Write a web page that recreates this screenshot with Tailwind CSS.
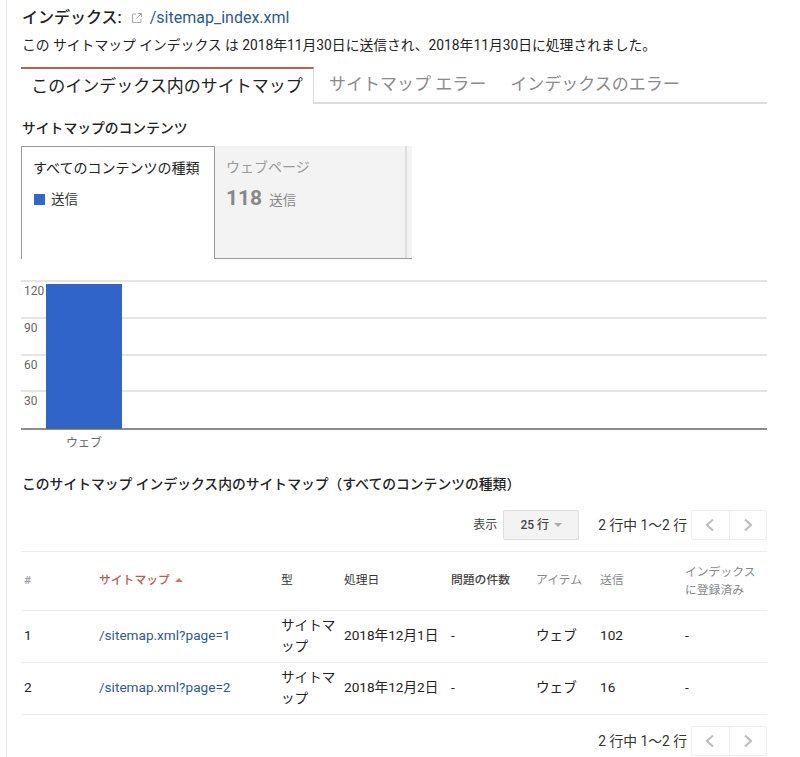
<!DOCTYPE html>
<html lang="ja">
<head>
    <meta charset="UTF-8">
    <title>サイトマップ</title>
    <script src="https://cdn.jsdelivr.net/npm/@tailwindcss/browser@4"></script>
</head>
<body class="bg-white text-[#222] font-['Roboto','Noto_Sans_CJK_JP',sans-serif] overflow-hidden">
    <div class="ml-[6px] h-[757px] border-l border-[#e8e8e8] pl-[14px] pr-[33px] overflow-hidden">

        <!-- 見出し -->
        <div class="h-[36px] flex items-center gap-[9px] text-[16px] leading-[20px] pl-[1px]">
            <span class="font-medium">インデックス:</span>
            <svg class="w-[12px] h-[12px] text-[#aaa]" viewBox="0 0 12 12" fill="none" stroke="currentColor" stroke-width="1">
                <path d="M5 2H1.5v8.5H10V7M7 1.5h3.5V5M10.5 1.5L5.5 6.5"/>
            </svg>
            <a class="text-[#2d5a8e] -ml-[2px]">/sitemap_index.xml</a>
        </div>
        <p class="text-[13.8px] leading-[18px] whitespace-nowrap pl-[1px]">この サイトマップ インデックス は 2018年11月30日に送信され、2018年11月30日に処理されました。</p>

        <!-- タブ -->
        <div class="flex mt-[13px] h-[37px] border-b-2 border-[#ddd] text-[17px]">
            <div class="w-[293px] h-[37px] border-t-2 border-t-[#c0604f] border-r border-r-[#ddd] bg-white flex items-center justify-center">このインデックス内のサイトマップ</div>
            <div class="pl-[15px] flex items-center text-[#8a8a8a] h-[35px]">サイトマップ エラー</div>
            <div class="pl-[24px] flex items-center text-[#8a8a8a] h-[35px]">インデックスのエラー</div>
        </div>

        <h2 class="mt-[15px] pl-[1px] text-[13.8px] leading-[18px] font-medium">サイトマップのコンテンツ</h2>

        <!-- コンテンツの種類 -->
        <div class="flex mt-[9px] h-[113px]">
            <div class="w-[193px] border-l border-t border-[#999] pl-[12px] pt-[11px]">
                <div class="text-[14px] leading-[20px] whitespace-nowrap -ml-[1px]">すべてのコンテンツの種類</div>
                <div class="flex items-center gap-[6px] mt-[11px] text-[13.5px] leading-[20px] text-[#333]">
                    <span class="w-[11px] h-[11px] bg-[#3366cc]"></span>送信
                </div>
            </div>
            <div class="w-[198px] border-b border-[#999] bg-[#f3f3f3] flex">
                <div class="w-[193px] border-r-2 border-[#ddd] pl-[11px] pt-[11px] border-l border-l-[#999]">
                    <div class="text-[14px] leading-[20px] text-[#999]">ウェブページ</div>
                    <div class="flex items-baseline gap-[7px] mt-[7px] text-[#888]">
                        <span class="text-[21px] leading-[28px] font-bold">118</span>
                        <span class="text-[13.5px]">送信</span>
                    </div>
                </div>
            </div>
        </div>

        <!-- グラフ -->
        <svg class="block mt-[21px] w-[746px] h-[172px] font-['Roboto','Noto_Sans_CJK_JP',sans-serif]" viewBox="0 0 746 172">
            <g stroke="#ddd" stroke-width="1.5">
                <line x1="0" x2="746" y1="1" y2="1"/>
                <line x1="0" x2="746" y1="38" y2="38"/>
                <line x1="0" x2="746" y1="75" y2="75"/>
                <line x1="0" x2="746" y1="111" y2="111"/>
            </g>
            <rect x="25" y="4" width="76" height="145" fill="#3064c8"/>
            <line x1="0" x2="746" y1="149" y2="149" stroke="#666" stroke-width="1.5"/>
            <g fill="#666" font-size="12">
                <text x="3" y="15">120</text>
                <text x="3" y="52">90</text>
                <text x="3" y="89">60</text>
                <text x="3" y="125">30</text>
                <text x="63" y="167" text-anchor="middle">ウェブ</text>
            </g>
        </svg>

        <h2 class="mt-[23px] pl-[1px] text-[13.8px] leading-[18px] font-medium">このサイトマップ インデックス内のサイトマップ（すべてのコンテンツの種類）</h2>

        <!-- ページ送り -->
        <div class="flex items-center justify-end h-[30px] mt-[17px] text-[12px]">
            <span class="text-[#444] mr-[6px]">表示</span>
            <div class="w-[76px] h-[30px] border border-[#ddd] rounded-[2px] bg-[#f3f3f3] flex items-center justify-center gap-[5px] text-[#444] font-medium">
                25 行
                <span class="w-0 h-0 border-x-[4px] border-x-transparent border-t-[4px] border-t-[#aaa]"></span>
            </div>
            <span class="ml-[19px] mr-[4px] text-[13.8px] text-[#333]">2 行中 1〜2 行</span>
            <div class="w-[76px] h-[30px] border border-[#eee] rounded-[2px] flex">
                <div class="flex-1 flex items-center justify-center border-r border-[#eee]">
                    <svg class="w-[12px] h-[14px]" viewBox="0 0 12 14" fill="none" stroke="#bbb" stroke-width="2"><path d="M9 1.5L3 7l6 5.5"/></svg>
                </div>
                <div class="flex-1 flex items-center justify-center">
                    <svg class="w-[12px] h-[14px]" viewBox="0 0 12 14" fill="none" stroke="#bbb" stroke-width="2"><path d="M3 1.5L9 7l-6 5.5"/></svg>
                </div>
            </div>
        </div>

        <!-- テーブル -->
        <table class="mt-[11px] w-[746px] table-fixed border-collapse text-[13.6px]">
            <thead>
                <tr class="h-[59px] border-y border-[#eee] text-[11.8px] text-left">
                    <th class="w-[78px] pl-[3px] font-medium text-[#999]">#</th>
                    <th class="w-[182px] pl-0 font-medium text-[#b85c4c]">サイトマップ <span class="inline-block ml-[2px] mb-[2px] w-0 h-0 border-x-[4px] border-x-transparent border-b-[4px] border-b-[#c97a6c]"></span></th>
                    <th class="w-[63px] font-normal text-[#333]">型</th>
                    <th class="w-[107px] font-normal text-[#333]">処理日</th>
                    <th class="w-[85px] font-medium text-[#444]">問題の件数</th>
                    <th class="w-[64px] font-normal text-[#888]">アイテム</th>
                    <th class="w-[85px] font-normal text-[#888]">送信</th>
                    <th class="font-normal text-[#888] leading-[18px]">インデックス<br>に登録済み</th>
                </tr>
            </thead>
            <tbody class="[&_td]:pb-[3px]">
                <tr class="h-[52px] border-b border-[#eee]">
                    <td class="pl-[3px]">1</td>
                    <td class="text-[#2d5a8e]">/sitemap.xml?page=1</td>
                    <td class="pt-[2px] leading-[21px]">サイトマップ</td>
                    <td>2018年12月1日</td>
                    <td>-</td>
                    <td>ウェブ</td>
                    <td>102</td>
                    <td>-</td>
                </tr>
                <tr class="h-[52px] border-b border-[#eee]">
                    <td class="pl-[3px]">2</td>
                    <td class="text-[#2d5a8e]">/sitemap.xml?page=2</td>
                    <td class="pt-[2px] leading-[21px]">サイトマップ</td>
                    <td>2018年12月2日</td>
                    <td>-</td>
                    <td>ウェブ</td>
                    <td>16</td>
                    <td>-</td>
                </tr>
            </tbody>
        </table>

        <div class="flex items-center justify-end h-[30px] mt-[11px]">
            <span class="mr-[4px] text-[13.8px] text-[#333]">2 行中 1〜2 行</span>
            <div class="w-[76px] h-[30px] border border-[#eee] rounded-[2px] flex">
                <div class="flex-1 flex items-center justify-center border-r border-[#eee]">
                    <svg class="w-[12px] h-[14px]" viewBox="0 0 12 14" fill="none" stroke="#bbb" stroke-width="2"><path d="M9 1.5L3 7l6 5.5"/></svg>
                </div>
                <div class="flex-1 flex items-center justify-center">
                    <svg class="w-[12px] h-[14px]" viewBox="0 0 12 14" fill="none" stroke="#bbb" stroke-width="2"><path d="M3 1.5L9 7l-6 5.5"/></svg>
                </div>
            </div>
        </div>
    </div>
</body>
</html>
